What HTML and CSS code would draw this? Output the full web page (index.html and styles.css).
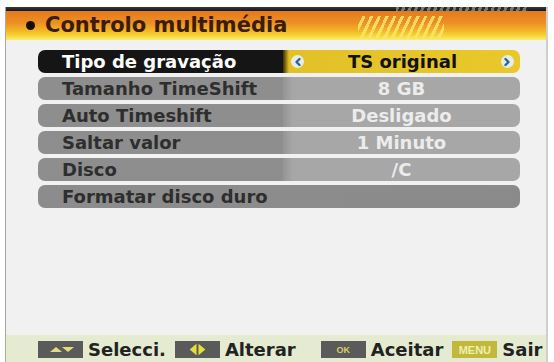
FILE: index.html
```html
<!DOCTYPE html>
<html lang="pt">
<head>
<meta charset="utf-8">
<title>Controlo multimédia</title>
<link rel="stylesheet" href="styles.css">
</head>
<body>
<div class="screen">
  <div class="topbar"><div class="dashes"></div></div>
  <div class="header">
    <span class="bullet"></span>
    <span class="title">Controlo multimédia</span>
    <div class="stripes"></div>
  </div>
  <div class="list">
    <div class="row selected">
      <div class="label">Tipo de gravação</div>
      <div class="value">
        <span class="arrow"><svg viewBox="0 0 12 12" width="12" height="12"><path d="M7.5 3 L4.5 6 L7.5 9" fill="none" stroke="#2a62a8" stroke-width="2.4" stroke-linecap="round" stroke-linejoin="round"/></svg></span>
        <span class="vtext">TS original</span>
        <span class="arrow"><svg viewBox="0 0 12 12" width="12" height="12"><path d="M4.5 3 L7.5 6 L4.5 9" fill="none" stroke="#2a62a8" stroke-width="2.4" stroke-linecap="round" stroke-linejoin="round"/></svg></span>
      </div>
    </div>
    <div class="row">
      <div class="label">Tamanho TimeShift</div>
      <div class="value"><span class="vtext">8 GB</span></div>
    </div>
    <div class="row">
      <div class="label">Auto Timeshift</div>
      <div class="value"><span class="vtext">Desligado</span></div>
    </div>
    <div class="row">
      <div class="label">Saltar valor</div>
      <div class="value"><span class="vtext">1 Minuto</span></div>
    </div>
    <div class="row">
      <div class="label">Disco</div>
      <div class="value"><span class="vtext">/C</span></div>
    </div>
    <div class="row full">
      <div class="label">Formatar disco duro</div>
    </div>
  </div>
  <div class="footer">
    <div class="key">
      <span class="btn"><svg viewBox="0 0 45 17" width="45" height="17"><path d="M12 11 L18 6 L24 11 Z" fill="#e4dc7a"/><path d="M24 6 L36 6 L30 11 Z" fill="#e4dc7a"/></svg></span>
      <span class="ktext">Selecci.</span>
    </div>
    <div class="key">
      <span class="btn"><svg viewBox="0 0 46 17" width="46" height="17"><path d="M15 8.5 L22 2.5 L22 14.5 Z" fill="#e4df3a"/><path d="M31 8.5 L24 2.5 L24 14.5 Z" fill="#e4df3a"/></svg></span>
      <span class="ktext">Alterar</span>
    </div>
    <div class="key k3">
      <span class="btn"><span class="ok">OK</span></span>
      <span class="ktext">Aceitar</span>
    </div>
    <div class="key">
      <span class="btn menu"><span class="mtext">MENU</span></span>
      <span class="ktext">Sair</span>
    </div>
  </div>
</div>
</body>
</html>
```
FILE: styles.css
```css
html, body {
  margin: 0;
  padding: 0;
  background: #ffffff;
}
body {
  width: 554px;
  height: 362px;
  overflow: hidden;
  font-family: "DejaVu Sans", "Liberation Sans", sans-serif;
  font-weight: bold;
}
.screen {
  margin: 7px 6px 0 5px;
  height: 355px;
  background: #f1f1f1;
  border-left: 1px solid #a8a8a8;
  border-right: 2px solid #cfcfcf;
  display: flex;
  flex-direction: column;
  box-sizing: border-box;
}
.topbar {
  height: 4px;
  background: linear-gradient(#3a3a3a, #141414);
  position: relative;
}
.dashes {
  position: absolute;
  left: 390px;
  top: 0;
  width: 132px;
  height: 4px;
  background: repeating-linear-gradient(110deg, #777 0 3px, #2a2a2a 3px 6px);
}
.header {
  height: 29px;
  background: linear-gradient(#e67a1c 0%, #ec8f24 40%, #f2b928 70%, #f6dc38 88%, #f8ec80 100%);
  display: flex;
  align-items: center;
  position: relative;
}
.bullet {
  width: 9px;
  height: 9px;
  border-radius: 50%;
  background: #1a0e06;
  margin-left: 20px;
  margin-right: 10px;
}
.title {
  font-size: 21px;
  color: #3c1c02;
  line-height: 29px;
}
.stripes {
  position: absolute;
  left: 352px;
  top: 5px;
  width: 86px;
  height: 22px;
  background: repeating-linear-gradient(115deg, transparent 0 4px, rgba(250, 230, 110, 0.85) 4px 7px);
}
.list {
  padding: 10px 0 0 32px;
  display: flex;
  flex-direction: column;
  gap: 4px;
}
.row {
  width: 482px;
  height: 23px;
  display: grid;
  grid-template-columns: 245px 237px;
  font-size: 18px;
  line-height: 23px;
}
.label {
  background: #8e8e8e;
  color: #2e2e2e;
  padding-left: 24px;
  border-radius: 7px 0 0 7px;
  white-space: nowrap;
}
.value {
  background: linear-gradient(90deg, #959595 0, #a7a7a7 10px, #a7a7a7 100%);
  color: #ececec;
  border-radius: 0 7px 7px 0;
  display: flex;
  align-items: center;
  justify-content: center;
  position: relative;
}
.selected .label {
  background: #151515;
  color: #ffffff;
}
.selected .value {
  background: linear-gradient(90deg, #3a3000 0, #e2c128 6px, #e8c82a 100%);
  color: #111;
  justify-content: space-between;
  padding: 0 6px 0 8px;
}
.arrow {
  width: 13px;
  height: 13px;
  border-radius: 50%;
  background: #e6eee4;
  display: flex;
  align-items: center;
  justify-content: center;
}
.full {
  grid-template-columns: 482px;
}
.full .label {
  background: linear-gradient(90deg, #8c8c8c 0, #8c8c8c 60%, #8a8a8a 100%);
  border-radius: 7px;
}
.footer {
  margin-top: auto;
  height: 27px;
  background: #e4ebd0;
  display: flex;
  align-items: flex-start;
  padding: 6px 0 0 32px;
  gap: 9px;
  box-sizing: border-box;
}
.key {
  display: flex;
  align-items: center;
  gap: 5px;
}
.k3 {
  margin-left: 16px;
}
.btn {
  width: 45px;
  height: 17px;
  background: #5a5a5a;
  display: flex;
  align-items: center;
  justify-content: center;
}
.ok {
  font-size: 9px;
  color: #d8d060;
  font-family: "Liberation Sans", sans-serif;
}
.menu {
  background: #c2b83a;
}
.mtext {
  font-size: 11px;
  color: #eef0b0;
  font-family: "Liberation Sans", sans-serif;
  letter-spacing: 0;
}
.ktext {
  font-size: 18px;
  color: #222;
  line-height: 17px;
}
```
